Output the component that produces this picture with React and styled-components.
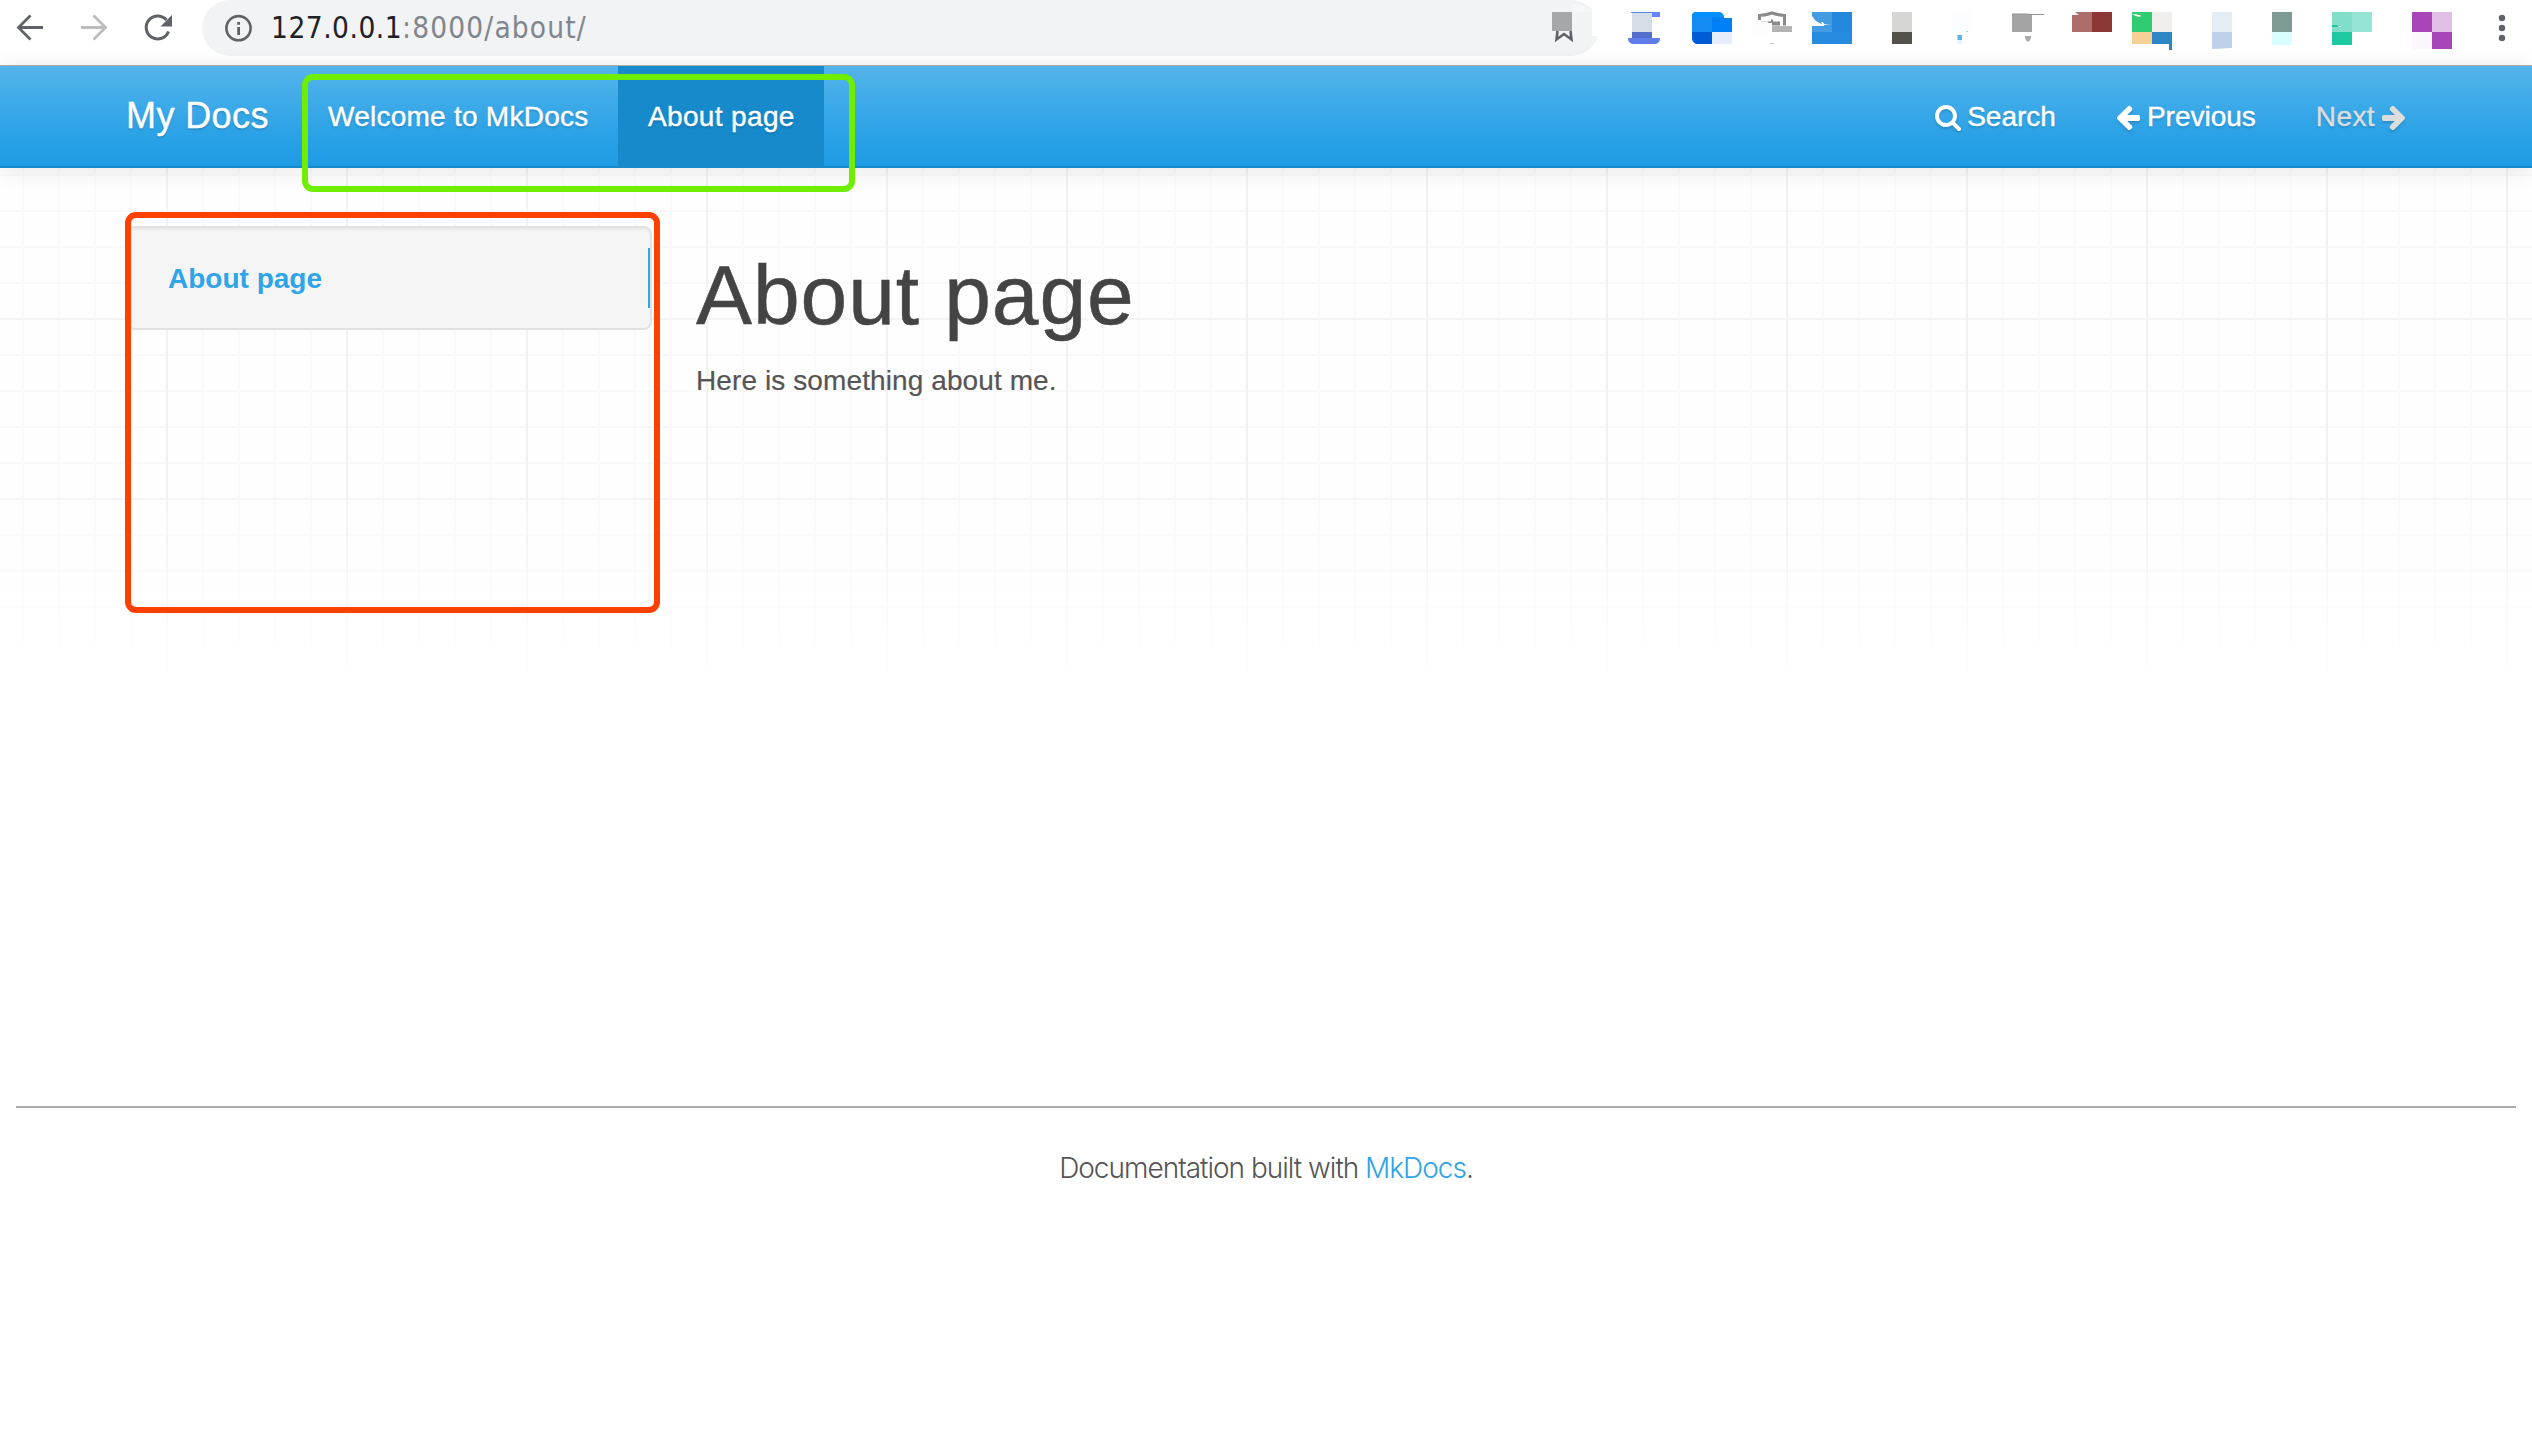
import React from 'react';
import styled, { createGlobalStyle, css } from 'styled-components';

const GlobalStyle = createGlobalStyle`
  * { box-sizing: border-box; }
  body {
    margin: 0;
    background: #fff;
    font-family: "Liberation Sans", Arial, sans-serif;
    font-size: 28px;
    line-height: 40px;
    color: #555;
  }
  a { color: inherit; text-decoration: none; }
  svg { display: block; flex: none; }
`;

const Page = styled.div`
  position: relative;
  width: 2532px;
  height: 1430px;
  overflow: hidden;
  display: flex;
  flex-direction: column;
`;

/* ---------- browser toolbar ---------- */

const Toolbar = styled.div`
  flex: none;
  display: flex;
  height: 66px;
  background: #fff;
  border-bottom: 1px solid #b4b2b0;
`;

const ToolbarButtons = styled.div`
  display: flex;
  width: 202px;
  height: 56px;
  align-items: center;
  gap: 32px;
  padding-left: 14px;
`;

const AddressBar = styled.div`
  display: flex;
  width: 1397px;
  height: 56px;
  align-items: center;
  background: #f1f3f4;
  border-radius: 28px;
  padding-left: 22px;
`;

const Url = styled.div`
  flex: 1;
  margin-left: 17px;
  font-family: "DejaVu Sans Condensed", "DejaVu Sans", sans-serif;
  font-stretch: condensed;
  font-size: 29.5px;
  line-height: 57px;
  letter-spacing: 1.15px;
  color: #80868b;
  white-space: nowrap;
`;

const Host = styled.span`
  letter-spacing: 0.5px;
  color: #202124;
`;

const Extensions = styled.div`
  display: flex;
  margin-left: 21px;
`;

const extensions = [
  { x: 1620, w: 60, shapes: <>
    <path d="M1630 12h30v5h-8v-4h-20z" fill="#6486f8" />
    <path d="M1632 13h20v19h-20z" fill="#d5dde6" />
    <path d="M1632 32h20v6h-20z" fill="#546ecb" />
    <path d="M1628 38h32q0 6-6 6h-20q-6 0-6-6z" fill="#5f7de8" />
  </> },
  { x: 1680, w: 60, shapes: <>
    <path d="M1696 12h22q6 0 6 6h8v14h-40V16q0-4 4-4z" fill="#0080f7" />
    <path d="M1695 12h23q5 0 6 5h-32q0-3 3-5z" fill="#0090ff" />
    <path d="M1692 17h20v15h-20z" fill="#148bf3" />
    <path d="M1692 32h20v12h-16q-4-2-4-6z" fill="#005bd6" />
    <path d="M1712 32h20v12h-20z" fill="#e6edfb" />
  </> },
  { x: 1740, w: 60, shapes: <>
    <path d="M1759.500 20v-4.500q7-.5 12.500-2.500q6 2 12.500 2.500v10" fill="none" stroke="#8b8b8b" strokeWidth="3" />
    <path d="M1761 21.500h10v-2h2v2h7v4h-8v-2.500h-11z" fill="#8b8b8b" />
    <path d="M1752 21.500h16v14h-16z" fill="#fdfdfd" />
    <path d="M1772 26h20v6h-20z" fill="#b3b3b3" />
    <path d="M1770 43h4v1h-4z" fill="#c4c4c4" />
  </> },
  { x: 1800, w: 60, shapes: <>
    <path d="M1812 12h20v20h-20z" fill="#449be2" />
    <path d="M1832 12h20v20h-20z" fill="#2388dc" />
    <path d="M1812 32h40v12h-40z" fill="#278be0" />
    <path d="M1812 16q5 8 12 8v2h-12z" fill="#fff" />
    <path d="M1821 22l2 0 1 2q4 1 8 1h-9z" fill="#fff" />
  </> },
  { x: 1860, w: 80, shapes: <>
    <path d="M1892 12h20v20h-20z" fill="#d6d6d4" />
    <path d="M1892 32h20v12h-20z" fill="#54504c" />
  </> },
  { x: 1940, w: 60, shapes: <>
    <path d="M1952 13h20v19h-20z" fill="#fbfdff" />
    <path d="M1957.500 35h4.500v5h-4.500z" fill="#58b5e5" />
    <path d="M1957.500 40h4.500v4h-4.500z" fill="#e5f5fc" />
    <path d="M1966 31h2v1h-2z" fill="#a5d8f0" />
  </> },
  { x: 2000, w: 60, shapes: <>
    <path d="M2012 14h20v18h-20z" fill="#a4a4a4" />
    <path d="M2012 14h13l7 .5h12" fill="none" stroke="#929292" strokeWidth="1" />
    <path d="M2025 36h6v2l-2 3.500h-2l-2-3.500z" fill="#aaa" />
  </> },
  { x: 2060, w: 60, shapes: <>
    <path d="M2075 12h17v20h-20V15h7z" fill="#ac6d6b" />
    <path d="M2092 12h20v20h-20z" fill="#8c3635" />
  </> },
  { x: 2120, w: 80, shapes: <>
    <path d="M2132 12h20v20h-20z" fill="#30cc71" />
    <path d="M2132 14q4-.5 9 1.500l-1 1.500q-3 0-8-3z" fill="#fff" />
    <path d="M2152 12h20v20h-20z" fill="#f0efee" />
    <path d="M2132 32h20v12h-20z" fill="#f7d095" />
    <path d="M2152 32h20v18h-3v-6h-17z" fill="#2e87c4" />
  </> },
  { x: 2200, w: 60, shapes: <>
    <path d="M2212 12h20v20h-20z" fill="#e4ecf4" />
    <path d="M2212 32h20v16l-20 1z" fill="#bfd0e9" />
  </> },
  { x: 2260, w: 60, shapes: <>
    <path d="M2272 12h20v20h-20z" fill="#7f9a95" />
    <path d="M2272 32h20v13h-20z" fill="#d8fffb" />
  </> },
  { x: 2320, w: 80, shapes: <>
    <path d="M2332 12h20v20h-20z" fill="#81dec8" />
    <path d="M2352 12h20v20h-20z" fill="#94e5d3" />
    <path d="M2332 32h20v13h-20z" fill="#1ec8a0" />
    <path d="M2332 25h5l1 1v1h-6z" fill="#1ec8a0" />
    <path d="M2339 26h2v1h-2z" fill="#fff" />
  </> },
  { x: 2400, w: 80, shapes: <>
    <path d="M2412 12h20v20h-20z" fill="#a846b9" />
    <path d="M2432 12h20v20h-20z" fill="#e1bfe6" />
    <path d="M2412 32h20v17h-20z" fill="#fbf7fd" />
    <path d="M2432 32h20v17h-20z" fill="#a846b9" />
  </> },
];

const BackIcon = () => (
  <svg width="32" height="32" viewBox="14 12 32 32" fill="none" stroke="#5f6368" strokeWidth="2.8">
    <path d="M43 27.500H19M30.500 15.500l-12 12 12 12" />
  </svg>
);
const ForwardIcon = () => (
  <svg width="32" height="32" viewBox="78 12 32 32" fill="none" stroke="#babcbe" strokeWidth="2.800">
    <path d="M81 27.500h24M93.500 15.500l12 12-12 12" />
  </svg>
);
const ReloadIcon = () => (
  <svg width="32" height="32" viewBox="142 12 32 32">
    <path d="M168.500 31.500A11.500 11.500 0 1 1 166.500 20" fill="none" stroke="#5f6368" strokeWidth="3" />
    <path d="M172 15v11.500h-11.500z" fill="#5f6368" />
  </svg>
);
const InfoIcon = () => (
  <svg width="30" height="30" viewBox="224 13 30 30">
    <circle cx="238.500" cy="28.200" r="12.100" fill="none" stroke="#5f6368" strokeWidth="2.600" />
    <path d="M237.200 27h2.800v8h-2.800zM237.200 22h2.800v2.800h-2.800z" fill="#5f6368" />
  </svg>
);
const BookmarkIcon = () => (
  <svg width="50" height="56" viewBox="1549 0 50 56">
    <path d="M1592 0h7v36h-7z" fill="#fff" />
    <path d="M1572 4q14 0 20 8H1572z" fill="#f5f7f8" />
    <path d="M1552 12h20v19h-20z" fill="#a5a8aa" />
    <path d="M1557.500 31l-1 8.500 7.500-5.500 7.500 5.500-1-8.500" fill="none" stroke="#5f6368" strokeWidth="2.600" />
  </svg>
);
const MenuIcon = () => (
  <svg width="52" height="56" viewBox="2480 0 52 56" fill="#5f6368">
    <circle cx="2502" cy="18" r="3.200" />
    <circle cx="2502" cy="28" r="3.200" />
    <circle cx="2502" cy="38" r="3.200" />
  </svg>
);

/* ---------- site navigation ---------- */

const Navbar = styled.nav`
  flex: none;
  position: relative;
  display: flex;
  height: 102px;
  padding: 0 91px 0 126px;
  background: linear-gradient(#54b4eb, #2fa4e7 60%, #1d9ce5);
  border-bottom: 2px solid #178acc;
  box-shadow: 0 2px 20px rgba(0, 0, 0, 0.1);
  color: #fff;
  text-shadow: 0 2px 2px rgba(0, 0, 0, 0.15);
  -webkit-text-stroke: 0.4px currentColor;
  white-space: nowrap;
`;

const Brand = styled.a`
  width: 172px;
  padding-top: 30px;
  font-size: 36px;
  letter-spacing: 0.4px;
`;

const NavLink = styled.a`
  display: flex;
  gap: ${(p) => p.$gap || 8}px;
  height: 102px;
  padding: 31px ${(p) => p.$end || 0}px 0 30px;
  width: ${(p) => (p.$width ? `${p.$width}px` : 'auto')};
  letter-spacing: ${(p) => p.$tracking || 0}px;
  ${(p) => p.$active && css`background: #178acc;`}
  ${(p) => p.$disabled && css`color: #ddd;`}
`;

const NavRight = styled.div`
  display: flex;
  margin-left: auto;
`;

const Glyph = styled.svg`
  width: 28px;
  height: 28px;
  margin-top: 6px;
  fill: currentColor;
  filter: drop-shadow(0 2px 1px rgba(0, 0, 0, 0.15));
`;

const SearchGlyph = () => (
  <Glyph viewBox="0 0 1792 1792">
    <path d="M1152 832q0-185-131.500-316.500t-316.500-131.500-316.500 131.500-131.500 316.500 131.500 316.500 316.500 131.500 316.500-131.500 131.500-316.500zm512 832q0 52-38 90t-90 38q-54 0-90-38l-343-342q-179 124-399 124-143 0-273.500-55.500t-225-150-150-225-55.500-273.500 55.500-273.500 150-225 225-150 273.500-55.500 273.500 55.500 225 150 150 225 55.500 273.500q0 220-124 399l343 343q37 37 37 90z" />
  </Glyph>
);
const arrowPath = 'M1664 896v128q0 53-32.500 90.500t-84.500 37.500h-704l293 294q38 36 38 90t-38 90l-75 76q-37 37-90 37-52 0-91-37l-651-652q-37-37-37-90 0-52 37-91l651-650q38-38 91-38 52 0 90 38l75 74q38 38 38 91t-38 91l-293 293h704q52 0 84.500 37.500t32.500 90.500z';
const ArrowLeft = () => <Glyph viewBox="0 0 1792 1792"><path d={arrowPath} /></Glyph>;
const ArrowRight = () => (
  <Glyph viewBox="0 0 1792 1792"><path d={arrowPath} transform="translate(1664 0) scale(-1 1)" /></Glyph>
);

/* ---------- page body ---------- */

const Body = styled.main`
  position: relative;
  flex: none;
  height: 938px;
  display: flex;
  padding: 58px 126px 0;

  &::before {
    content: "";
    position: absolute;
    inset: 0;
    z-index: -1;
    background:
      linear-gradient(rgba(255, 255, 255, 0) 320px, #fff 525px),
      repeating-linear-gradient(90deg, #f2f2f2 0 2px, transparent 2px 180px) 166px 0 / 180px 100%,
      repeating-linear-gradient(#f4f4f4 0 2px, transparent 2px 180px) 0 150px / 100% 180px,
      repeating-linear-gradient(90deg, #f9f9f9 0 2px, transparent 2px 36px) 166px 0 / 36px 100%,
      repeating-linear-gradient(#f9f9f9 0 2px, transparent 2px 36px) 0 6px / 100% 36px,
      #fefefe;
  }
`;

const Sidebar = styled.aside`
  width: 526px;
  height: 104px;
  padding: 20px 0;
  background: #f5f5f5;
  border: 2px solid #e2e2e2;
  border-radius: 8px;
  box-shadow: inset 0 2px 2px rgba(0, 0, 0, 0.05);
`;

const SidebarLink = styled.a`
  display: block;
  height: 60px;
  padding: 11px 0 0 40px;
  border-right: 2px solid #2fa4e7;
  color: #2fa4e7;
  font-weight: bold;
`;

const Article = styled.article`
  padding: 23px 0 0 44px;
`;

const Title = styled.h1`
  margin: 0;
  font-size: 84px;
  line-height: 92px;
  font-weight: 400;
  letter-spacing: 0.9px;
  -webkit-text-stroke: 0.5px currentColor;
  color: #444;
`;

const Paragraph = styled.p`
  margin: 20px 0 0;
  letter-spacing: 0.1px;
  -webkit-text-stroke: 0.2px currentColor;
`;

const Footer = styled.footer`
  margin: 0 16px;
  padding-top: 40px;
  border-top: 2px solid #a9a9a9;
  text-align: center;
  font-family: Inter, "Liberation Sans", sans-serif;
  font-weight: 300;
  letter-spacing: -1px;
`;

const FooterLink = styled.a`
  && { color: #2fa4e7; }
`;

/* highlight frame drawn over the page */
const Frame = styled.div`
  position: absolute;
  left: ${(p) => p.$x}px;
  top: ${(p) => p.$y}px;
  width: ${(p) => p.$w}px;
  height: ${(p) => p.$h}px;
  border: 6px solid ${(p) => p.$color};
  border-radius: 11px;
`;

export default function App() {
  return (
    <Page>
      <GlobalStyle />
      <Toolbar>
        <ToolbarButtons>
          <BackIcon />
          <ForwardIcon />
          <ReloadIcon />
        </ToolbarButtons>
        <AddressBar>
          <InfoIcon />
          <Url><Host>127.0.0.1</Host>:8000/about/</Url>
          <BookmarkIcon />
        </AddressBar>
        <Extensions>
          {extensions.map((e) => (
            <svg key={e.x} width={e.w} height="56" viewBox={`${e.x} 0 ${e.w} 56`}>{e.shapes}</svg>
          ))}
          <MenuIcon />
        </Extensions>
      </Toolbar>
      <Navbar>
        <Brand href="#">My Docs</Brand>
        <NavLink href="#" $width={320} $tracking={0.25}>Welcome to MkDocs</NavLink>
        <NavLink href="#" $width={206} $tracking={0.35} $active>About page</NavLink>
        <NavRight>
          <NavLink href="#" $end={28} $gap={4}><SearchGlyph />Search</NavLink>
          <NavLink href="#" $end={30} $gap={5}><ArrowLeft />Previous</NavLink>
          <NavLink href="#" $end={31} $gap={7} $disabled $tracking={0.4}>Next<ArrowRight /></NavLink>
        </NavRight>
      </Navbar>
      <Body>
        <Sidebar>
          <SidebarLink href="#">About page</SidebarLink>
        </Sidebar>
        <Article>
          <Title>About page</Title>
          <Paragraph>Here is something about me.</Paragraph>
        </Article>
      </Body>
      <Footer>
        Documentation built with <FooterLink href="#">MkDocs</FooterLink>.
      </Footer>
      <Frame $x={302} $y={74} $w={553} $h={118} $color="#6fee00" />
      <Frame $x={125} $y={212} $w={535} $h={401} $color="#ff4000" />
    </Page>
  );
}
